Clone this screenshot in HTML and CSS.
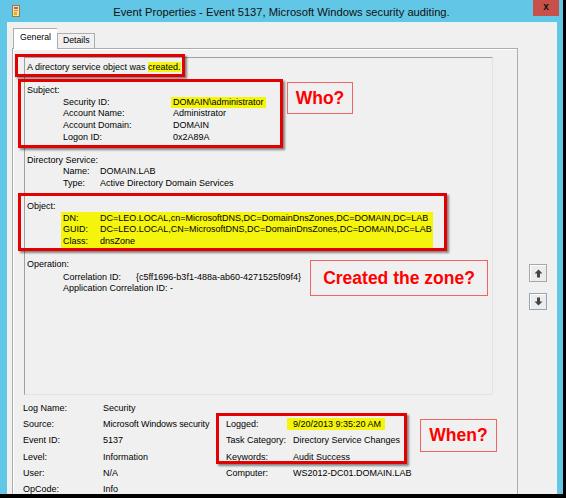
FILE: index.html
```html
<!DOCTYPE html>
<html>
<head>
<meta charset="utf-8">
<link rel="stylesheet" href="styles.css">
</head>
<body>
<div class="window">
  <div class="titlebar">
    <svg class="app-icon" width="8" height="12" viewBox="0 0 8 12">
      <rect x="0.5" y="0.5" width="7" height="11" fill="#efe3b0" stroke="#a07a3a"/>
      <rect x="2" y="2" width="4" height="2" fill="#d84a7a"/>
      <rect x="2" y="5" width="4" height="1" fill="#c89a40"/>
      <rect x="2" y="7" width="3" height="3" fill="#e0b020"/>
    </svg>
    <div class="title">Event Properties - Event 5137, Microsoft Windows security auditing.</div>
    <div class="close">x</div>
  </div>
  <div class="client">
    <div class="tabctl">
      <div class="tabs">
        <div class="tab active">General</div>
        <div class="tab">Details</div>
      </div>
      <div class="panel">
        <div class="desc">
          <div class="line">A directory service object was <span class="hl">created.</span></div>
          <div class="line"></div>
          <div class="line">Subject:</div>
          <div class="kv subject">
            <div>Security ID:</div><div><span class="hl sid">DOMAIN\administrator</span></div>
            <div>Account Name:</div><div>Administrator</div>
            <div>Account Domain:</div><div>DOMAIN</div>
            <div>Logon ID:</div><div>0x2A89A</div>
          </div>
          <div class="line"></div>
          <div class="line">Directory Service:</div>
          <div class="kv dirsvc">
            <div>Name:</div><div>DOMAIN.LAB</div>
            <div>Type:</div><div>Active Directory Domain Services</div>
          </div>
          <div class="line"></div>
          <div class="line">Object:</div>
          <div class="kv object">
            <div>DN:</div><div>DC=LEO.LOCAL,cn=MicrosoftDNS,DC=DomainDnsZones,DC=DOMAIN,DC=LAB</div>
            <div>GUID:</div><div>DC=LEO.LOCAL,CN=MicrosoftDNS,DC=DomainDnsZones,DC=DOMAIN,DC=LAB</div>
            <div>Class:</div><div>dnsZone</div>
          </div>
          <div class="line"></div>
          <div class="line">Operation:</div>
          <div class="kv oper">
            <div>Correlation ID:</div><div>{c5ff1696-b3f1-488a-ab60-4271525f09f4}</div>
            <div class="span">Application Correlation ID: -</div>
          </div>
        </div>
        <div class="summary">
          <div>Log Name:</div><div>Security</div><div></div><div></div>
          <div>Source:</div><div class="narrow">Microsoft Windows security</div><div>Logged:</div><div><span class="hl logged">9/20/2013 9:35:20 AM</span></div>
          <div>Event ID:</div><div>5137</div><div>Task Category:</div><div>Directory Service Changes</div>
          <div>Level:</div><div>Information</div><div>Keywords:</div><div>Audit Success</div>
          <div>User:</div><div>N/A</div><div>Computer:</div><div>WS2012-DC01.DOMAIN.LAB</div>
          <div>OpCode:</div><div>Info</div><div></div><div></div>
        </div>
      </div>
    </div>
    <div class="side">
      <div class="navbtn up">
        <svg width="9" height="9" viewBox="0 0 9 9"><path d="M4.5 0.5 L8.5 4.5 L6 4.5 L6 8.5 L3 8.5 L3 4.5 L0.5 4.5 Z" fill="#444"/></svg>
      </div>
      <div class="navbtn down">
        <svg width="9" height="9" viewBox="0 0 9 9"><path d="M4.5 8.5 L8.5 4.5 L6 4.5 L6 0.5 L3 0.5 L3 4.5 L0.5 4.5 Z" fill="#444"/></svg>
      </div>
    </div>
  </div>

  <div class="redbox rb1"></div>
  <div class="redbox rb2"></div>
  <div class="redbox rb3"></div>
  <div class="redbox rb4"></div>
  <div class="callout who">Who?</div>
  <div class="callout zone">Created the zone?</div>
  <div class="callout when">When?</div>
</div>
</body>
</html>
```

FILE: styles.css
```css
html, body {
  margin: 0;
  padding: 0;
  background: #000;
}
body {
  width: 566px;
  height: 498px;
  overflow: hidden;
  font-family: "Liberation Sans", Arial, sans-serif;
  color: #000;
}
.window {
  position: relative;
  width: 563px;
  height: 494px;
  background: #62c6e6;
  display: flex;
  flex-direction: column;
  padding: 0 6px 0 7px;
  box-sizing: border-box;
  overflow: hidden;
}
.titlebar {
  height: 22px;
  flex: none;
  position: relative;
}
.app-icon {
  position: absolute;
  left: 5px;
  top: 5px;
}
.title {
  position: absolute;
  left: -7px;
  right: -6px;
  top: 6px;
  text-align: center;
  font-size: 11.2px;
  color: #111;
  white-space: nowrap;
}
.close {
  position: absolute;
  right: -2px;
  top: 0;
  width: 26px;
  height: 16px;
  background: #c7504b;
  color: #111;
  font-weight: bold;
  font-size: 10px;
  line-height: 14px;
  text-align: center;
}
.client {
  flex: 1;
  background: #f0f0f0;
  display: flex;
  padding: 5px 0 0 5px;
  box-sizing: border-box;
  border-top: 1px solid #e6f4fa;
}
.tabctl {
  width: 506px;
  display: flex;
  flex-direction: column;
  flex: none;
}
.tabs {
  display: flex;
  align-items: flex-end;
  height: 20px;
  padding-left: 1px;
}
.tab {
  font-size: 8.7px;
  border: 1px solid #adadad;
  border-bottom: none;
  box-sizing: border-box;
  height: 15px;
  line-height: 13px;
  padding: 0 5px;
  background: #f0f0f0;
}
.tab.active {
  height: 21px;
  line-height: 17px;
  padding: 0 6px;
  background: #fff;
  position: relative;
  margin-bottom: -1px;
  z-index: 1;
  border-right: none;
}
.panel {
  flex: 1;
  border: 1px solid #adadad;
  border-bottom: none;
  background: #f0f0f0;
  box-shadow: inset 1px 1px 0 #fff;
}
.desc {
  margin: 8px 0 0 11px;
  width: 469px;
  height: 338px;
  box-sizing: border-box;
  border-top: 1px solid #a0a0a0;
  border-left: 1px solid #a0a0a0;
  border-right: 1px solid #e3e3e3;
  border-bottom: 1px solid #e3e3e3;
  padding: 4px 0 0 2px;
  font-size: 9px;
  line-height: 11.6px;
  white-space: nowrap;
}
.line {
  height: 11.6px;
}
.kv {
  display: grid;
  margin-left: 36px;
}
.kv > div {
  height: 11.6px;
}
.subject { grid-template-columns: 110px auto; }
.dirsvc { grid-template-columns: 37px auto; }
.object {
  grid-template-columns: 37px auto;
  margin-left: 34px;
  padding: 1px 0 1px 2px;
  margin-top: -1px;
  margin-bottom: -1px;
  width: 372px;
  box-sizing: border-box;
  background: #f4f40c;
}
.oper { grid-template-columns: 73px auto; margin-top: 1px; }
.oper .span { grid-column: 1 / -1; }
.hl {
  background: #f4f40c;
}
.sid {
  margin-left: -2px;
  padding: 0 2px 1px 2px;
}
.summary {
  display: grid;
  grid-template-columns: 80px 123px 67px 1fr;
  grid-auto-rows: 16.2px;
  align-items: center;
  margin: 5px 0 0 10px;
  font-size: 9px;
  white-space: nowrap;
}
.narrow {
  letter-spacing: -0.1px;
}
.logged {
  margin-left: -6px;
  padding: 1px 4px 1px 6px;
}
.side {
  margin-left: 11px;
  padding-top: 236px;
  display: flex;
  flex-direction: column;
  gap: 11px;
}
.navbtn {
  width: 18px;
  height: 18px;
  box-sizing: border-box;
  border: 1px solid #a8a8a8;
  background: #ececec;
  box-shadow: inset 1px 1px 0 #fff;
  display: flex;
  align-items: center;
  justify-content: center;
}
.navbtn.down {
  height: 17px;
  border-color: #8fa6ba;
}
.redbox {
  position: absolute;
  border: 3px solid #e30000;
  box-sizing: border-box;
  box-shadow: 2px 2px 2px rgba(0, 0, 0, 0.45);
}
.rb1 { left: 15px; top: 54px; width: 170px; height: 23px; }
.rb2 { left: 18px; top: 79px; width: 265px; height: 69px; }
.rb3 { left: 18px; top: 193px; width: 429px; height: 58px; }
.rb4 { left: 216px; top: 413px; width: 191px; height: 51px; }
.callout {
  position: absolute;
  border: 1px solid #f06464;
  box-sizing: border-box;
  background: #f0f0f0;
  color: #f00;
  font-weight: bold;
  font-size: 17.5px;
  display: flex;
  align-items: center;
  justify-content: center;
  white-space: nowrap;
}
.who { left: 287px; top: 82px; width: 66px; height: 32px; }
.zone { left: 310px; top: 260px; width: 178px; height: 36px; }
.when { left: 420px; top: 419px; width: 77px; height: 33px; }
```
